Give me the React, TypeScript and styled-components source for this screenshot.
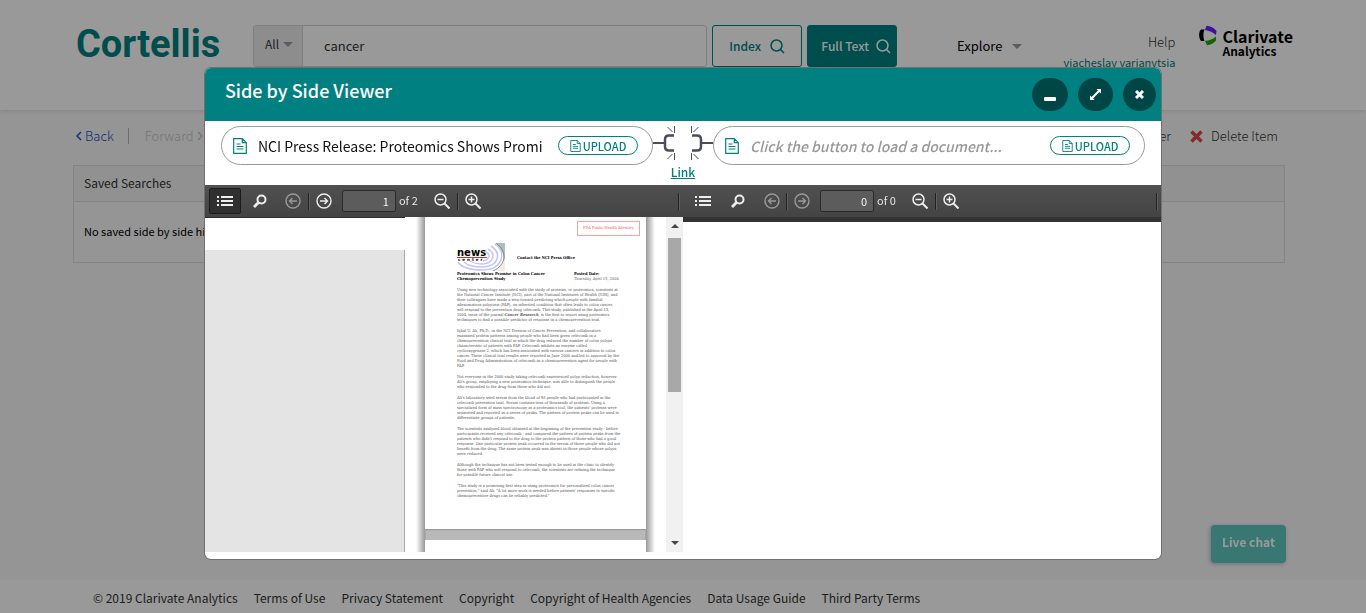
import React from "react";
import styled, { createGlobalStyle, css } from "styled-components";

const TEAL = "#008080";
const SANS = '"Noto Sans CJK SC", "Noto Sans", sans-serif';

const GlobalStyle = createGlobalStyle`
  *, *::before, *::after { box-sizing: border-box; }
  body { margin: 0; font-family: ${SANS}; font-size: 13px; line-height: 20px; color: #333; overflow: hidden; }
  button, input, select { font: inherit; color: inherit; margin: 0; padding: 0; }
  button { cursor: pointer; }
  svg { display: block; flex: none; }
  a { color: inherit; text-decoration: none; }
`;

/* ---------- Page behind the viewer ---------- */

const Page = styled.div`
  display: flex;
  flex-direction: column;
  min-height: 100vh;
  background: #f9f9f9;
`;

const Header = styled.header`
  display: flex;
  align-items: flex-start;
  height: 110px;
  padding: 25px 73px 0 76px;
  background: #fff;
  box-shadow: 0 1px 4px rgba(0, 0, 0, 0.12);
`;

const Brand = styled.a`
  width: 177px;
  font-family: Roboto, sans-serif;
  font-size: 38px;
  line-height: 38px;
  font-weight: 700;
  color: ${TEAL};
`;

const Search = styled.form`
  display: flex;
  flex: 1;
  gap: 5px;
  height: 42px;
`;

const SearchField = styled.div`
  display: flex;
  flex: 1;
  border: 1px solid #d4d4d4;
  border-radius: 3px;
`;

const ScopeBox = styled.label`
  display: flex;
  align-items: center;
  gap: 2px;
  width: 49px;
  padding: 0 0 4px 11px;
  background: #ececec;
  border-right: 1px solid #d4d4d4;
`;

const Scope = styled.select`
  width: 16px;
  appearance: none;
  border: 0;
  background: transparent;
  font-size: 12px;
`;

const Caret = styled.span`
  border: 5px solid transparent;
  border-top-color: #999;
  border-bottom: 0;
`;

const Query = styled.input`
  flex: 1;
  min-width: 0;
  padding-left: 21px;
  border: 0;
  background: transparent;
  font-size: 13px;
`;

const SearchButton = styled.button<{ $filled?: boolean }>`
  display: flex;
  align-items: center;
  justify-content: flex-end;
  gap: ${(p) => (p.$filled ? 7 : 9)}px;
  width: 90px;
  padding-right: ${(p) => (p.$filled ? 5 : 16)}px;
  border: 1px solid ${TEAL};
  border-radius: 3px;
  background: ${(p) => (p.$filled ? TEAL : "transparent")};
  color: ${(p) => (p.$filled ? "#fff" : TEAL)};
  font-size: 12px;
  font-weight: 500;
`;

const Explore = styled.button`
  display: flex;
  align-items: center;
  gap: 10px;
  height: 42px;
  margin: 0 41px 0 60px;
  border: 0;
  background: transparent;
  color: #000;
`;

const Account = styled.div`
  display: flex;
  flex-direction: column;
  align-items: flex-end;
  width: 112px;
  margin-right: 24px;
  padding-top: 7px;
  white-space: nowrap;
`;

const HelpLink = styled.a`
  font-weight: 300;
`;

const UserLink = styled.a`
  font-size: 11px;
  color: ${TEAL};
`;

const Company = styled.div`
  display: flex;
  gap: 5px;
  color: #000;
  font-weight: 700;
`;

const CompanyName = styled.div`
  font-size: 16px;
  line-height: 16px;
  padding-top: 3px;
`;

const CompanyUnit = styled.div`
  font-size: 12px;
  line-height: 14px;
`;

const Main = styled.main`
  flex: 1;
  padding: 14px 81px 0 73px;
`;

const Actions = styled.nav`
  display: flex;
  align-items: center;
  height: 24px;
  margin-bottom: 17px;
  padding: 0 7px 0 3px;
`;

const NavButton = styled.button<{ $off?: boolean }>`
  display: flex;
  align-items: center;
  gap: 3px;
  border: 0;
  background: transparent;
  font-weight: 300;
  color: ${(p) => (p.$off ? "#c4c4c4" : "#2450b4")};
`;

const NavDivider = styled.span`
  width: 1px;
  height: 16px;
  margin: 0 16px 0 14px;
  background: #b4b4b4;
`;

const ItemTools = styled.div`
  display: flex;
  gap: 19px;
  margin-left: auto;
`;

const ToolButton = styled.button`
  display: flex;
  align-items: center;
  gap: 8px;
  border: 0;
  background: transparent;
  font-weight: 300;
  color: #333;
`;

const Card = styled.section`
  border: 1px solid #dcdcdc;
`;

const CardTitle = styled.h2`
  margin: 0;
  padding: 7px 10px;
  height: 36px;
  border-bottom: 1px solid #dcdcdc;
  background: #f2f2f2;
  font-size: 12px;
  font-weight: 400;
`;

const CardBody = styled.p`
  margin: 0;
  padding: 19px 10px;
  height: 60px;
  font-size: 11px;
  color: #000;
`;

const Footer = styled.footer`
  display: flex;
  gap: 16px;
  padding: 8px 93px 5px;
  background: #fff;
  font-size: 12px;
`;

const Chat = styled.button`
  position: fixed;
  right: 80px;
  bottom: 50px;
  width: 75px;
  height: 38px;
  padding-bottom: 4px;
  border: 0;
  border-radius: 4px;
  background: #5fc6be;
  box-shadow: -1px 1px 4px rgba(0, 0, 0, 0.25);
  color: #fff;
  font-size: 12px;
  font-weight: 700;
`;

/* ---------- Viewer dialog ---------- */

const Overlay = styled.div`
  position: fixed;
  inset: 0;
  display: flex;
  align-items: flex-start;
  justify-content: center;
  padding-top: 68px;
  background: rgba(0, 0, 0, 0.4);
`;

const Dialog = styled.div`
  display: flex;
  flex-direction: column;
  width: 70%;
  height: calc(100vh - 122px);
  padding-bottom: 7px;
  overflow: hidden;
  border-radius: 6px;
  background: #fff;
  box-shadow: 0 0 0 1px #707070;
`;

const DialogHeader = styled.div`
  display: flex;
  flex: none;
  align-items: flex-start;
  justify-content: space-between;
  height: 53px;
  padding: 10px 5px 0 20px;
  background: ${TEAL};
`;

const DialogTitle = styled.h1`
  margin: 0;
  font-size: 18px;
  line-height: 24px;
  font-weight: 500;
  color: #fff;
`;

const WindowButtons = styled.div`
  display: flex;
  gap: 10px;
`;

const RoundButton = styled.button<{ $w: number }>`
  display: grid;
  place-items: center;
  width: ${(p) => p.$w}px;
  height: 33px;
  border: 0;
  border-radius: 17px;
  background: #004646;
`;

const Sources = styled.div`
  display: flex;
  flex: none;
  height: 64px;
  padding: 5px 16px 0;
`;

const SourcePill = styled.div`
  display: flex;
  flex: 1;
  align-items: center;
  min-width: 0;
  height: 39px;
  padding: 0 14px 0 11px;
  border: 1px solid #999;
  border-radius: 20px;
`;

const SourceName = styled.input`
  flex: 1;
  min-width: 0;
  margin: 0 9px 0 11px;
  border: 0;
  outline: 0;
  background: transparent;
  font-size: 14px;
  line-height: 22px;
  color: #111;
  &::placeholder {
    color: #999;
    opacity: 1;
    font-style: italic;
    font-weight: 500;
  }
`;

const Upload = styled.button`
  display: flex;
  align-items: center;
  justify-content: center;
  gap: 2px;
  width: 80px;
  height: 19px;
  border: 1px solid ${TEAL};
  border-radius: 10px;
  background: #fff;
  color: ${TEAL};
  font-size: 11px;
  line-height: 16px;
  font-weight: 500;
`;

const LinkColumn = styled.div`
  display: flex;
  flex-direction: column;
  align-items: center;
  width: 60px;
`;

const LinkButton = styled.button`
  border: 0;
  background: transparent;
  font-size: 12px;
  line-height: 20px;
  font-weight: 500;
  color: ${TEAL};
  text-decoration: underline;
`;

const Viewers = styled.div`
  display: flex;
  flex: 1;
  min-height: 0;
`;

const Viewer = styled.section`
  display: flex;
  flex: 1;
  flex-direction: column;
  min-width: 0;
`;

const Toolbar = styled.div`
  display: flex;
  flex: none;
  align-items: center;
  height: 32px;
  padding: 0 4px;
  background: linear-gradient(#505050, #444);
  color: #e6e6e6;
`;

const ToolbarButton = styled.button<{ $on?: boolean; $w?: number }>`
  display: grid;
  place-items: center;
  width: ${(p) => p.$w ?? 30}px;
  height: 26px;
  border: 1px solid transparent;
  border-radius: 2px;
  background: transparent;
  color: #eee;
  &:disabled {
    color: #999;
  }
  ${(p) =>
    p.$on &&
    css`
      border-color: #1c1c1c;
      background: #303030;
    `}
`;

const Split = styled.span`
  width: 1px;
  height: 17px;
  background: #222;
  box-shadow: 1px 0 0 #606060;
`;

const PageNumber = styled.input`
  width: 54px;
  height: 22px;
  margin: 0 3px;
  padding-right: 6px;
  border: 1px solid #2a2a2a;
  border-radius: 2px;
  background: #5c5c5c;
  font-size: 11px;
  text-align: right;
  color: #f2f2f2;
`;

const PageCount = styled.span`
  width: 28px;
  padding-bottom: 2px;
  font-size: 11px;
`;

const Spring = styled.span`
  flex: 1;
`;

const Strip = styled.div`
  height: 5px;
  background: #333;
`;

const DocArea = styled.div`
  display: flex;
  flex: 1;
  min-height: 0;
`;

const Thumbnails = styled.aside`
  width: 200px;
  padding-top: 32px;
  border-top: 1px solid #2a2a2a;
  background: #fff;
`;

const ThumbnailList = styled.div`
  height: 100%;
  border-right: 1px solid #aaa;
  background: #e4e4e4;
`;

const Pages = styled.div`
  flex: 1;
  overflow: hidden;
`;

const PageStack = styled.div`
  display: flex;
  flex-direction: column;
  gap: 11px;
  width: 239px;
  margin: 0 11px;
  padding: 0 9px;
  background: linear-gradient(90deg, #fff, #999 9px, #b8b8b8 10px, #b8b8b8 229px, #999 230px, #fff);
`;

const Sheet = styled.article`
  height: 312px;
  padding: 4px 6px 0 32px;
  background: #fff;
  box-shadow: 0 1px 1px #999;
  color: #555;
  font-family: "DejaVu Serif Condensed", "Liberation Serif", serif;
  font-size: 4px;
  line-height: 5px;
  white-space: nowrap;
`;

const Advisory = styled.div`
  width: 63px;
  height: 15px;
  margin-left: auto;
  padding-top: 3px;
  border: 1px solid #ffa0a0;
  color: #f55;
  text-align: center;
`;

const Masthead = styled.div`
  display: flex;
  align-items: center;
  gap: 12px;
  margin-top: 7px;
  color: #000;
  font-weight: 700;
`;

const Headline = styled.div`
  display: flex;
  margin-bottom: 6px;
  color: #000;
`;

const HeadlineCell = styled.div<{ $w?: number }>`
  width: ${(p) => (p.$w ? `${p.$w}px` : "auto")};
`;

const Dateline = styled.div`
  color: #666;
`;

const Paragraph = styled.p`
  margin: 0 0 6px;
`;

const Scrollbar = styled.div`
  display: flex;
  flex-direction: column;
  align-items: center;
  justify-content: space-between;
  width: 17px;
  padding: 7px 0;
  background: #f1f1f1;
`;

const Thumb = styled.div`
  width: 13px;
  height: 154px;
  margin: 10px 0 auto;
  background: #a8a8a8;
`;

const ScrollArrow = styled.span<{ $down?: boolean }>`
  border: 4px solid transparent;
  ${(p) =>
    p.$down
      ? "border-top-color: #444; border-bottom: 0;"
      : "border-bottom-color: #444; border-top: 0;"}
`;

/* ---------- Icons ---------- */

const Magnifier = () => (
  <svg width="15" height="15" viewBox="0 0 15 15" fill="none" stroke="currentColor" strokeWidth="1.5">
    <circle cx="6.5" cy="6.5" r="5.5" />
    <path d="M10.5 10.5 14 14" />
  </svg>
);

const DocIcon = ({ w, h }: { w: number; h: number }) => (
  <svg width={w} height={h} viewBox="0 0 14 16" fill="none" stroke={TEAL} strokeWidth="1.2">
    <path d="M.7.7h8.6l4 4v10.6H.7zM9.3.7v4h4M3.5 6h4M3.5 8.5h7M3.5 11h7" />
  </svg>
);

const CompanyMark = () => (
  <svg width="18" height="21" viewBox="0 0 18 21">
    <path d="M2 4.500C-.5 7-.5 12.500 2 16h3.500C4 12.500 4 8 5.500 4.500z" fill="#000" />
    <path d="M7.500.8C11.500 1 15 2.800 17.500 6L17 10C14 7.500 10.500 5.500 6 5z" fill="#6a1fff" />
    <path d="M6 16C10.500 15.500 14 14 17 11.500V15.500C14.500 18.500 11 20 8 20.200z" fill="#1fa800" />
  </svg>
);

const BrokenLink = () => (
  <svg width="60" height="36" viewBox="0 0 60 36" fill="none" stroke="#4a4d5c">
    <path strokeWidth="2" d="M0 17h11M49 17h11" />
    <path strokeWidth="2.5" d="M21 9.500h-5q-4 0-4 4v7q0 4 4 4h5M39 9.500h5q4 0 4 4v7q0 4-4 4h-5" />
    <path d="M21.500 0v7M14.500 1l5 5M21.500 27v7M14.500 33l5-5M38.500 0v7M45.500 1l-5 5M38.500 27v7M45.500 33l-5-5" />
  </svg>
);

const ListIcon = () => (
  <svg width="16" height="12" viewBox="0 0 16 12" fill="currentColor">
    <path d="M0 1h2v2H0zM0 5h2v2H0zM0 9h2v2H0zM4 1h12v2H4zM4 5h12v2H4zM4 9h12v2H4z" />
  </svg>
);

const FindIcon = () => (
  <svg width="14" height="14" viewBox="0 0 14 14" fill="none" stroke="currentColor">
    <circle cx="8.5" cy="5.5" r="4" strokeWidth="2" />
    <path d="M5.500 8.500 1 13" strokeWidth="2.8" />
  </svg>
);

const ArrowIcon = ({ back }: { back?: boolean }) => (
  <svg width="16" height="16" viewBox="0 0 16 16" fill="none" stroke="currentColor" strokeWidth="1.4">
    <circle cx="8" cy="8" r="7" />
    <path d={back ? "M12 8H4.500M7.500 5l-3 3 3 3" : "M4 8h7.500M8.500 5l3 3-3 3"} />
  </svg>
);

const ZoomIcon = ({ plus }: { plus?: boolean }) => (
  <svg width="16" height="16" viewBox="0 0 16 16" fill="none" stroke="currentColor" strokeWidth="1.5">
    <circle cx="6.5" cy="6.5" r="5.5" />
    <path d={plus ? "M3.500 6.500h6M6.500 3.500v6" : "M3.500 6.500h6"} />
    <path d="M10.500 10.500 15.500 15.500" strokeWidth="2" />
  </svg>
);

const Chevron = ({ right }: { right?: boolean }) => (
  <svg width="6" height="10" viewBox="0 0 6 10" fill="none" stroke="currentColor" strokeWidth="1.5">
    <path d={right ? "M1 1l4 4-4 4" : "M5 1 1 5l4 4"} />
  </svg>
);

const DeleteIcon = () => (
  <svg width="13" height="13" viewBox="0 0 13 13" stroke="#e04848" strokeWidth="3.5">
    <path d="M1.500 1.500l10 10M11.500 1.500l-10 10" />
  </svg>
);

const NewsLogo = () => (
  <svg width="48" height="28" viewBox="0 0 48 28">
    <path d="M38 0h10v20c-1-8-4-15-10-20z" fill="#a9bfc0" />
    <path d="M38 28h10V15c-2 6-5 10-10 13z" fill="#f4ece0" />
    <g fill="none" stroke="#c4c4f8" strokeWidth="1.5">
      <path d="M38 1c12 9 8 25-12 26C12 27 4 24 1 19" />
      <path d="M34 3c11 7 8 20-8 21C17 24 10 22 7 19" />
      <path d="M31 6c9 5 5 14-5 15-6 0-10-1-13-3" />
      <path d="M29 9c6 3 2 8-3 9" />
    </g>
    <path d="M39 0c12 9 10 22-3 28" fill="none" stroke="#888" />
    <text x="0" y="13" fontFamily="DejaVu Sans" fontWeight="700" fontSize="10" fill="#000">news</text>
    <path d="M0 14.500h30" stroke="#c33" />
    <text x="1" y="18" fontFamily="DejaVu Sans" fontSize="4" letterSpacing="2" fill="#000">center</text>
  </svg>
);

/* ---------- Content ---------- */

const paragraphs: React.ReactNode[][] = [
  [
    "Using new technology associated with the study of proteins, or proteomics, scientists at",
    "the National Cancer Institute (NCI), part of the National Institutes of Health (NIH), and",
    "their colleagues have made a step toward predicting which people with familial",
    "adenomatous polyposis (FAP), an inherited condition that often leads to colon cancer,",
    "will respond to the prevention drug celecoxib. This study, published in the April 15,",
    <>2004, issue of the journal <b><i>Cancer Research</i></b>, is the first to report using proteomics</>,
    "techniques to find a possible predictor of response in a chemoprevention trial.",
  ],
  [
    "Iqbal U. Ali, Ph.D., in the NCI Division of Cancer Prevention, and collaborators",
    "examined protein patterns among people who had been given celecoxib in a",
    "chemoprevention clinical trial in which the drug reduced the number of colon polyps",
    "characteristic of patients with FAP. Celecoxib inhibits an enzyme called",
    "cyclooxygenase 2, which has been associated with various cancers in addition to colon",
    "cancer. These clinical trial results were reported in June 2000 and led to approval by the",
    "Food and Drug Administration of celecoxib as a chemoprevention agent for people with",
    "FAP.",
  ],
  [
    "Not everyone in the 2000 study taking celecoxib experienced polyp reduction, however.",
    "Ali's group, employing a new proteomics technique, was able to distinguish the people",
    "who responded to the drug from those who did not.",
  ],
  [
    "Ali's laboratory used serum from the blood of 93 people who had participated in the",
    "celecoxib prevention trial. Serum contains tens of thousands of proteins. Using a",
    "specialized form of mass spectroscopy as a proteomics tool, the patients' proteins were",
    "separated and reported as a series of peaks. The pattern of protein peaks can be used to",
    "differentiate groups of patients.",
  ],
  [
    "The scientists analyzed blood obtained at the beginning of the prevention study - before",
    "participants received any celecoxib - and compared the pattern of protein peaks from the",
    "patients who didn't respond to the drug to the protein pattern of those who had a good",
    "response. One particular protein peak occurred in the serum of those people who did not",
    "benefit from the drug. The same protein peak was absent in those people whose polyps",
    "were reduced.",
  ],
  [
    "Although the technique has not been tested enough to be used in the clinic to identify",
    "those with FAP who will respond to celecoxib, the scientists are refining the technique",
    "for possible future clinical use.",
  ],
  [
    "\"This study is a promising first step in using proteomics for personalized colon cancer",
    "prevention,\" said Ali. \"A lot more work is needed before patients' responses to specific",
    "chemopreventive drugs can be reliably predicted.\"",
  ],
];

const footerLinks = [
  "Terms of Use",
  "Privacy Statement",
  "Copyright",
  "Copyright of Health Agencies",
  "Data Usage Guide",
  "Third Party Terms",
];

const Source = ({ name }: { name?: string }) => (
  <SourcePill>
    <DocIcon w={14} h={16} />
    <SourceName
      aria-label="Document name"
      defaultValue={name}
      placeholder="Click the button to load a document..."
      readOnly
    />
    <Upload type="button">
      <DocIcon w={11} h={12} />
      UPLOAD
    </Upload>
  </SourcePill>
);

const PdfToolbar = ({ page, total, open }: { page: number; total: number; open?: boolean }) => (
  <Toolbar>
    <ToolbarButton $on={open} $w={32} aria-label="Toggle sidebar"><ListIcon /></ToolbarButton>
    <ToolbarButton $w={38} aria-label="Find in document"><FindIcon /></ToolbarButton>
    <ToolbarButton $w={29} aria-label="Previous page" disabled><ArrowIcon back /></ToolbarButton>
    <Split />
    <ToolbarButton aria-label="Next page" disabled={total === 0}><ArrowIcon /></ToolbarButton>
    <PageNumber aria-label="Page" defaultValue={page} />
    <PageCount>of {total}</PageCount>
    <ToolbarButton aria-label="Zoom out"><ZoomIcon /></ToolbarButton>
    <Split />
    <ToolbarButton aria-label="Zoom in"><ZoomIcon plus /></ToolbarButton>
    <Spring />
    <Split />
  </Toolbar>
);

export default function App() {
  return (
    <>
      <GlobalStyle />
      <Page>
        <Header>
          <Brand href="#">Cortellis</Brand>
          <Search onSubmit={(e) => e.preventDefault()}>
            <SearchField>
              <ScopeBox>
                <Scope aria-label="Search scope"><option>All</option></Scope>
                <Caret />
              </ScopeBox>
              <Query aria-label="Search" defaultValue="cancer" />
            </SearchField>
            <SearchButton type="button">Index <Magnifier /></SearchButton>
            <SearchButton type="submit" $filled>Full Text <Magnifier /></SearchButton>
          </Search>
          <Explore type="button">Explore <Caret /></Explore>
          <Account>
            <HelpLink href="#">Help</HelpLink>
            <UserLink href="#">viacheslav varianytsia</UserLink>
          </Account>
          <Company>
            <CompanyMark />
            <div>
              <CompanyName>Clarivate</CompanyName>
              <CompanyUnit>Analytics</CompanyUnit>
            </div>
          </Company>
        </Header>
        <Main>
          <Actions>
            <NavButton><Chevron />Back</NavButton>
            <NavDivider />
            <NavButton $off>Forward<Chevron right /></NavButton>
            <ItemTools>
              <ToolButton>Viewer</ToolButton>
              <ToolButton><DeleteIcon />Delete Item</ToolButton>
            </ItemTools>
          </Actions>
          <Card>
            <CardTitle>Saved Searches</CardTitle>
            <CardBody>No saved side by side history</CardBody>
          </Card>
        </Main>
        <Footer>
          <span>© 2019 Clarivate Analytics</span>
          {footerLinks.map((label) => <a key={label} href="#">{label}</a>)}
        </Footer>
        <Chat type="button">Live chat</Chat>
      </Page>

      <Overlay>
        <Dialog role="dialog" aria-label="Side by Side Viewer">
          <DialogHeader>
            <DialogTitle>Side by Side Viewer</DialogTitle>
            <WindowButtons>
              <RoundButton $w={36} aria-label="Minimize">
                <svg width="12" height="12" viewBox="0 0 12 12"><rect y="8" width="12" height="4" rx="1" fill="#fff" /></svg>
              </RoundButton>
              <RoundButton $w={35} aria-label="Maximize">
                <svg width="11" height="11" viewBox="0 0 12 12" fill="#fff"><path d="M7 0h5v5L10.300 3.300 3.300 10.300 5 12H0V7l1.700 1.700 7-7z" /></svg>
              </RoundButton>
              <RoundButton $w={33} aria-label="Close">
                <svg width="9" height="9" viewBox="0 0 9 9" stroke="#fff" strokeWidth="3"><path d="M1 1l7 7M8 1 1 8" /></svg>
              </RoundButton>
            </WindowButtons>
          </DialogHeader>
          <Sources>
            <Source name="NCI Press Release: Proteomics Shows Promi" />
            <LinkColumn>
              <BrokenLink />
              <LinkButton type="button">Link</LinkButton>
            </LinkColumn>
            <Source />
          </Sources>
          <Viewers>
            <Viewer>
              <PdfToolbar page={1} total={2} open />
              <DocArea>
                <Thumbnails><ThumbnailList /></Thumbnails>
                <Pages>
                  <PageStack>
                    <Sheet>
                      <Advisory>FDA Public Health Advisory</Advisory>
                      <Masthead><NewsLogo /><span>Contact the NCI Press Office</span></Masthead>
                      <Headline>
                        <HeadlineCell $w={117}>
                          <b>Proteomics Shows Promise in Colon Cancer<br />Chemoprevention Study</b>
                        </HeadlineCell>
                        <HeadlineCell>
                          <b>Posted Date:</b>
                          <Dateline>Thursday, April 15, 2004</Dateline>
                        </HeadlineCell>
                      </Headline>
                      {paragraphs.map((lines, i) => (
                        <Paragraph key={i}>
                          {lines.map((line, j) => <React.Fragment key={j}>{line}<br /></React.Fragment>)}
                        </Paragraph>
                      ))}
                    </Sheet>
                    <Sheet />
                  </PageStack>
                </Pages>
                <Scrollbar><ScrollArrow /><Thumb /><ScrollArrow $down /></Scrollbar>
              </DocArea>
            </Viewer>
            <Viewer>
              <PdfToolbar page={0} total={0} />
              <Strip />
            </Viewer>
          </Viewers>
        </Dialog>
      </Overlay>
    </>
  );
}
